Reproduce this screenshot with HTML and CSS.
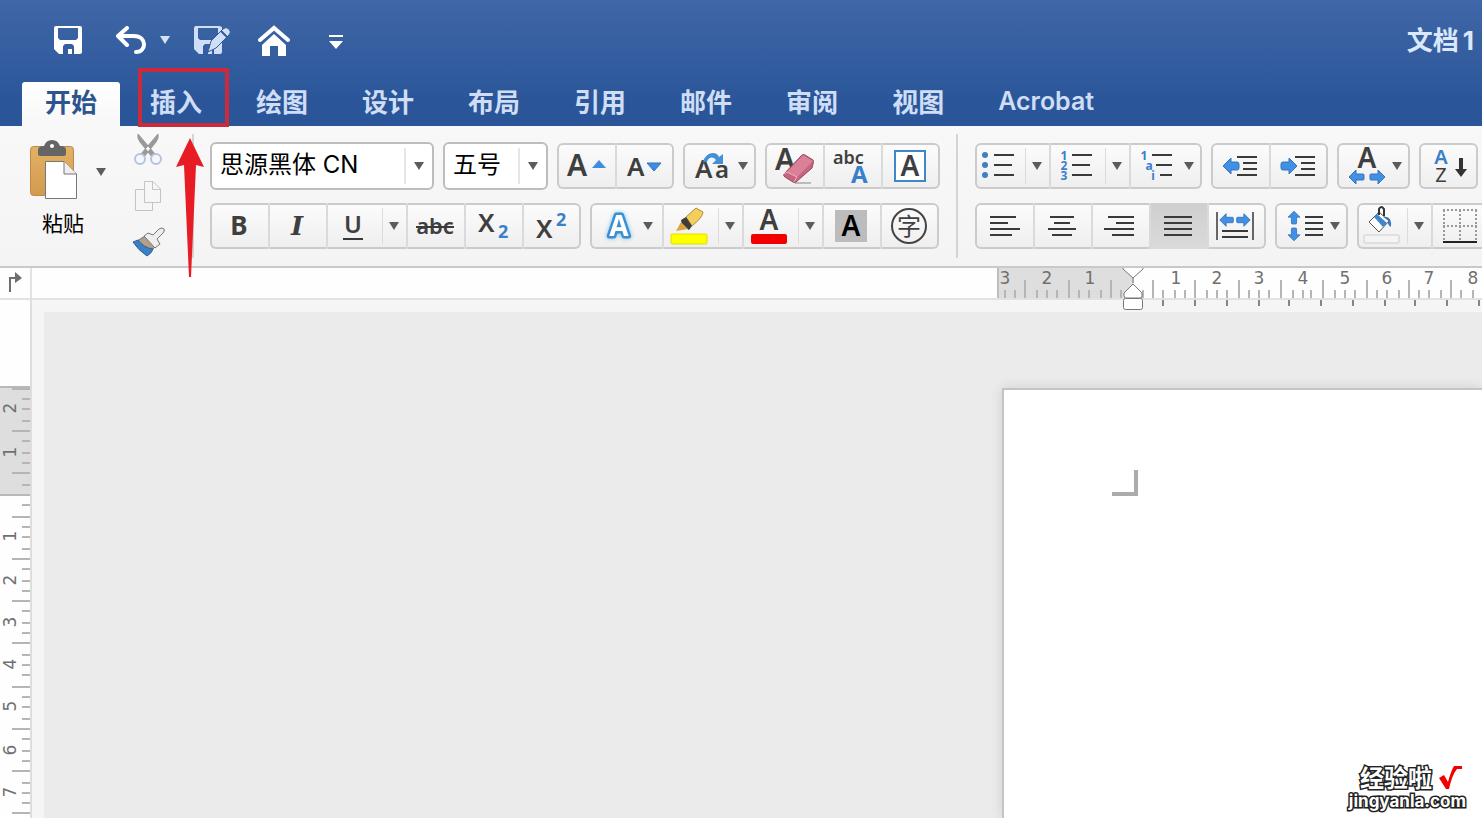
FILE: index.html
```html
<!DOCTYPE html>
<html lang="zh-CN">
<head>
<meta charset="utf-8">
<title>文档1</title>
<link rel="stylesheet" href="styles.css">
</head>
<body>
<svg class="defs" width="0" height="0" aria-hidden="true">
  <defs>
    <path id="tri" d="M-5-4H5L0 4Z" fill="#5c5c5c"/>
    <path id="arrow" d="M-8 0L0-8V-4H6Q8-4 8-2V2Q8 4 6 4H0V8Z" fill="#4190e4" stroke="#3475bd" stroke-width="1"/>
    <path id="arrow-s" d="M-8 0L-1-7V-3H6Q7-3 7-2V2Q7 3 6 3H-1V7Z" fill="#4190e4" stroke="#3475bd" stroke-width="1"/>
    <linearGradient id="board" x1="0" y1="0" x2="0" y2="1"><stop offset="0" stop-color="#e3b165"/><stop offset="1" stop-color="#d29a50"/></linearGradient>
  </defs>
</svg>

<header class="titlebar">
  <div class="quick">
    <button class="quick-btn save" aria-label="保存">
      <svg width="28" height="28" viewBox="0 0 28 28"><path fill="#fff" fill-rule="evenodd" d="M2 0H26Q28 0 28 2V26Q28 28 26 28H5L0 23V2Q0 0 2 0ZM4 2V12L6 14H22L24 12V2ZM9 28H14V23H18V28H20V20L18 18H11L9 20Z"/></svg>
    </button>
    <button class="quick-btn undo" aria-label="撤销">
      <svg width="32" height="28" viewBox="0 0 32 28" fill="none" stroke="#fff" stroke-width="4" stroke-linecap="round" stroke-linejoin="round"><path d="M11 2L2 10L11 19M3 10H18C31 10 31 26 20 26"/></svg>
    </button>
    <button class="quick-btn undo-more" aria-label="撤销选项">
      <svg width="10" height="8" viewBox="-5 -4 10 8"><path d="M-5-4H5L0 4Z" fill="#d3e0f7"/></svg>
    </button>
    <button class="quick-btn edit" aria-label="另存为">
      <svg width="36" height="28" viewBox="0 0 36 28"><path fill="#d0def6" fill-rule="evenodd" d="M2 0H25Q28 0 28 2V26Q28 28 26 28H5L0 23V2Q0 0 2 0ZM4 2V12L6 14H21L24 11V2ZM9 28H14V23H18V28H20V20L18 18H11L9 20Z"/><path d="M29 3Q32 0 35 3Q38 6 35 9L22 22L14 26L17 15Z" fill="#d0def6" stroke="#33599b" stroke-width="1"/><path d="M27 5L33 11" stroke="#33599b" stroke-width="2"/></svg>
    </button>
    <button class="quick-btn home" aria-label="主页">
      <svg width="32" height="31" viewBox="0 0 32 31"><path d="M2 15L16 3L30 15" fill="none" stroke="#fff" stroke-width="4" stroke-linecap="round"/><path d="M4 20L16 9L28 20V31H20V21H12V31H4Z" fill="#fff"/></svg>
    </button>
    <button class="quick-btn custom" aria-label="自定义快速访问工具栏">
      <svg width="14" height="14" viewBox="0 0 14 14" fill="#fff"><path d="M0 0H14V2H0ZM0 6H14L7 14Z"/></svg>
    </button>
    <h1 class="doc-title">文档<span class="doc-num">1</span></h1>
  </div>
  <nav class="tabs" role="tablist">
    <button class="tab tab-active" role="tab" aria-selected="true">开始</button>
    <button class="tab" role="tab">插入</button>
    <button class="tab" role="tab">绘图</button>
    <button class="tab" role="tab">设计</button>
    <button class="tab" role="tab">布局</button>
    <button class="tab" role="tab">引用</button>
    <button class="tab" role="tab">邮件</button>
    <button class="tab" role="tab">审阅</button>
    <button class="tab" role="tab">视图</button>
    <button class="tab" role="tab">Acrobat</button>
  </nav>
</header>

<section class="ribbon">
  <div class="paste">
    <button class="paste-btn">
      <svg width="47" height="59" viewBox="0 0 47 59">
        <rect x="0.500" y="6.500" width="43" height="49" rx="3" fill="url(#board)" stroke="#bd8b45"/>
        <path d="M8 10Q8 6 14 6Q16 0 22 0Q28 0 30 6Q36 6 36 10V14Q36 16 34 16H10Q8 16 8 14Z" fill="#656565"/>
        <circle cx="22" cy="6" r="2" fill="#fff"/>
        <path d="M15.500 21.500H34L46.500 34V58.500H15.500Z" fill="#fff" stroke="#777"/>
        <path d="M34 21.500V34H46.500" fill="#eee" stroke="#777"/>
      </svg>
      <span class="paste-label">粘贴</span>
    </button>
    <button class="paste-more" aria-label="粘贴选项"><svg width="10" height="8" viewBox="-5 -4 10 8"><use href="#tri"/></svg></button>
  </div>
  <div class="clip">
    <button aria-label="剪切"><svg width="28" height="32" viewBox="0 0 28 32"><path d="M4 0Q3 4 6 8L18 23L21 20Z M24 0Q25 4 22 8L10 23L7 20Z" fill="#999" stroke="#999"/><circle cx="6" cy="25" r="5" fill="#f5f7fb" stroke="#b4c5e0" stroke-width="2"/><circle cx="22" cy="25" r="5" fill="#f5f7fb" stroke="#b4c5e0" stroke-width="2"/></svg></button>
    <button aria-label="复制"><svg width="28" height="32" viewBox="0 0 28 32" fill="#f6f6f6" stroke="#c4c4c4"><path d="M1.500 9.500H18.500V30.500H1.500Z"/><path d="M10.500 1.500H19L26.500 9V22.500H10.500ZM18.500 1.500V9.500H26.500"/></svg></button>
    <button aria-label="格式刷"><svg width="32" height="32" viewBox="0 0 32 32"><path d="M11 10L3 15L15 27L22 20Z" fill="#b79d87" stroke="#777"/><path d="M4 14L-1 16Q4 24 13 30Q18 27 19 23Q10 22 4 14Z" fill="#3b7fc4" stroke="#31629a"/><path d="M10 10L14 7L19 9L25 3Q28 1 30 3Q31 5 29 7L23 13L26 18L21 22Z" fill="#eee" stroke="#777"/></svg></button>
  </div>
  <div class="rule"></div>

  <div class="panel font-panel">
    <div class="row row-top">
      <div class="combo combo-name"><input type="text" value="思源黑体 CN" aria-label="字体"><button class="combo-more" aria-label="字体列表"><svg width="10" height="8" viewBox="-5 -4 10 8"><use href="#tri"/></svg></button></div>
      <div class="combo combo-size"><input type="text" value="五号" aria-label="字号"><button class="combo-more" aria-label="字号列表"><svg width="10" height="8" viewBox="-5 -4 10 8"><use href="#tri"/></svg></button></div>
      <div class="group">
        <button class="cell" aria-label="增大字号"><svg viewBox="2 0 56 46"><text x="10" y="33" class="g f30 semi">A</text><path d="M35 25L42 17L49 25Z" fill="#3f8ce0"/></svg></button>
        <button class="cell" aria-label="减小字号"><svg viewBox="2 0 56 46"><text x="12" y="33" class="g f26 semi">A</text><path d="M32 20H46L39 28Z" fill="#3f8ce0" stroke="#3475bd"/></svg></button>
      </div>
      <div class="group">
        <button class="cell drop" aria-label="更改大小写"><svg viewBox="2 0 70 46"><text x="12" y="35" class="g f26 semi">A</text><text x="32" y="35" class="g f24 semi">a</text><path d="M20 19C23 8 34 8 36 14L40 11V21H29L33 17C30 13 25 14 24 19Z" fill="#4190d8"/><use href="#tri" x="60" y="23"/></svg></button>
      </div>
      <div class="group">
        <button class="cell" aria-label="清除格式"><svg viewBox="2 0 56 46"><text x="10" y="27" class="g f30 semi">A</text><path d="M30 40H46" stroke="#bbb" stroke-width="2"/><path d="M19 31L37 12Q38 11 40 12L48 17Q49 18 48 21L47 25L31 39Q30 40 28 39L20 34Q18 33 19 31Z" fill="#c9637e" stroke="#8f4a5c"/><path d="M22 29L38 12L48 18L32 34Z" fill="#dc8098"/><path d="M19 31L22 29L32 34L29 39" fill="none" stroke="#e9b5c0"/></svg></button>
        <button class="cell" aria-label="拼音指南"><svg viewBox="2 0 56 46"><text x="10" y="21" class="g f18 semi">abc</text><text x="28" y="40" class="b f24 bold">A</text></svg></button>
        <button class="cell" aria-label="字符边框"><svg viewBox="2 0 56 46"><rect x="14" y="8" width="30" height="30" fill="#fff" stroke="#3f86cc" stroke-width="2"/><text x="29" y="33" class="g f28 semi mid">A</text></svg></button>
      </div>
    </div>
    <div class="row">
      <div class="group">
        <button class="cell" aria-label="加粗"><svg viewBox="2 0 56 46"><text x="29" y="32" class="g f26 bold mid">B</text></svg></button>
        <button class="cell" aria-label="倾斜"><svg viewBox="2 0 56 46"><text x="29" y="32" class="g f26 serif mid">I</text></svg></button>
        <button class="cell split" aria-label="下划线"><svg viewBox="2 0 54 46"><text x="27" y="30" class="g f24 semi mid">U</text><path d="M17 36H37" class="ln"/></svg></button><button class="more" aria-label="下划线样式"><svg viewBox="-12 -23 24 46"><use href="#tri"/></svg></button>
        <button class="cell" aria-label="删除线"><svg viewBox="2 0 56 46"><text x="29" y="31" class="g f22 semi mid">abc</text><path d="M10 24H48" class="ln"/></svg></button>
        <button class="cell" aria-label="下标"><svg viewBox="2 0 56 46"><text x="14" y="29" class="g f26 semi">X</text><text x="34" y="35" class="b f18 bold">2</text></svg></button>
        <button class="cell" aria-label="上标"><svg viewBox="2 0 56 46"><text x="14" y="35" class="g f26 semi">X</text><text x="34" y="23" class="b f18 bold">2</text></svg></button>
      </div>
      <div class="group">
        <button class="cell drop" aria-label="文本效果"><svg viewBox="2 0 70 46"><text x="29" y="33" class="f28 bold mid glow">A</text><use href="#tri" x="58" y="23"/></svg></button>
        <button class="cell split" aria-label="突出显示"><svg viewBox="2 0 54 46"><path d="M24 14L34 5L41 9Q41 14 30 23Z" fill="#f5cd5c" stroke="#b58d35"/><path d="M19 17L24 14L30 23L27 27L20 23Z" fill="#3d3d3d"/><path d="M14 28L19 19L26 26Z" fill="#d9a441"/><rect x="9" y="31" width="36" height="10" rx="1" fill="#ff0" stroke="#e0dc00"/></svg></button><button class="more" aria-label="突出显示颜色"><svg viewBox="-12 -23 24 46"><use href="#tri"/></svg></button>
        <button class="cell split" aria-label="字体颜色"><svg viewBox="2 0 54 46"><text x="27" y="27" class="g f28 semi mid">A</text><rect x="9" y="31" width="36" height="10" rx="2" fill="#f20000"/></svg></button><button class="more" aria-label="更多字体颜色"><svg viewBox="-12 -23 24 46"><use href="#tri"/></svg></button>
        <button class="cell" aria-label="字符底纹"><svg viewBox="2 0 56 46"><rect x="13" y="7" width="32" height="32" fill="#bcbcbc"/><text x="29" y="33" class="k f28 semi mid">A</text></svg></button>
        <button class="cell" aria-label="带圈字符"><svg viewBox="2 0 56 46"><circle cx="29" cy="23" r="17" fill="none" stroke="#444" stroke-width="2"/><text x="29" y="32" class="g f24 mid">字</text></svg></button>
      </div>
    </div>
  </div>
  <div class="rule rule-wide"></div>

  <div class="panel">
    <div class="row row-top">
      <div class="group">
        <button class="cell bullets" aria-label="项目符号"><svg viewBox="2 0 48 46"><g fill="#3f7fc2"><circle cx="10" cy="12" r="3"/><circle cx="10" cy="22" r="3"/><circle cx="10" cy="32" r="3"/></g><path d="M19 12H39M19 22H37M19 32H39" class="ln"/></svg></button><button class="more" aria-label="项目符号样式"><svg viewBox="-12 -23 24 46"><use href="#tri"/></svg></button>
        <button class="cell split" aria-label="编号"><svg viewBox="2 0 54 46"><g class="b f12 bold mid"><text x="15" y="17">1</text><text x="15" y="27">2</text><text x="15" y="37">3</text></g><path d="M23 12H43M23 22H41M23 32H43" class="ln"/></svg></button><button class="more" aria-label="编号样式"><svg viewBox="-12 -23 24 46"><use href="#tri"/></svg></button>
        <button class="cell drop" aria-label="多级列表"><svg viewBox="2 0 70 46"><g class="b f12 bold mid"><text x="15" y="17">1</text><text x="20" y="27">a</text><text x="24" y="37">i</text></g><path d="M23 12H43M27 22H43M31 32H43" class="ln"/><use href="#tri" x="60" y="23"/></svg></button>
      </div>
      <div class="group">
        <button class="cell" aria-label="减少缩进量"><svg viewBox="2 0 56 46"><path d="M26 14H46M32 20H46M32 26H46M26 32H46" class="ln"/><use href="#arrow" x="20" y="23"/></svg></button>
        <button class="cell" aria-label="增加缩进量"><svg viewBox="2 0 56 46"><path d="M26 14H46M32 20H46M32 26H46M26 32H46" class="ln"/><use href="#arrow" transform="translate(20 23) rotate(180)"/></svg></button>
      </div>
      <div class="group">
        <button class="cell drop" aria-label="中文版式"><svg viewBox="2 0 70 46"><text x="30" y="25" class="g f28 semi mid">A</text><use href="#arrow-s" x="20" y="34"/><use href="#arrow-s" transform="translate(40 34) rotate(180)"/><use href="#tri" x="60" y="23"/></svg></button>
      </div>
      <div class="group">
        <button class="cell" aria-label="排序"><svg viewBox="2 0 56 46"><text x="22" y="21" class="b f20 mid semi">A</text><text x="22" y="39" class="g f20 mid">Z</text><path d="M42 15V29" stroke="#333" stroke-width="4"/><path d="M36 26L42 34L48 26Z" fill="#333"/></svg></button>
      </div>
    </div>
    <div class="row">
      <div class="group">
        <button class="cell" aria-label="左对齐"><svg viewBox="2 0 56 46"><path d="M15 14H41M15 20H33M15 26H45M15 32H37" class="ln"/></svg></button>
        <button class="cell" aria-label="居中"><svg viewBox="2 0 56 46"><path d="M17 14H41M21 20H37M15 26H43M19 32H39" class="ln"/></svg></button>
        <button class="cell" aria-label="右对齐"><svg viewBox="2 0 56 46"><path d="M17 14H43M25 20H43M13 26H43M21 32H43" class="ln"/></svg></button>
        <button class="cell cell-on" aria-label="两端对齐" aria-pressed="true"><svg viewBox="2 0 56 46"><path d="M15 14H43M15 20H43M15 26H43M15 32H43" class="ln"/></svg></button>
        <button class="cell" aria-label="分散对齐"><svg viewBox="2 0 56 46"><path d="M10 9V37M46 9V37" stroke="#666" stroke-width="2"/><use href="#arrow-s" transform="translate(20 17) scale(.9)"/><use href="#arrow-s" transform="translate(36 17) rotate(180) scale(.9)"/><path d="M15 28H41M15 34H41" class="ln"/></svg></button>
      </div>
      <div class="group">
        <button class="cell drop" aria-label="行距"><svg viewBox="2 0 70 46"><use href="#arrow-s" transform="translate(19 15) rotate(90) scale(.85)"/><use href="#arrow-s" transform="translate(19 31) rotate(-90) scale(.85)"/><path d="M30 14H48M30 20H48M30 26H48M30 32H48" class="ln"/><use href="#tri" x="60" y="23"/></svg></button>
      </div>
      <div class="group">
        <button class="cell bullets" aria-label="底纹"><svg viewBox="2 0 48 46"><path d="M12 19L22 9L32 18L22 29Z" fill="#fff" stroke="#555"/><path d="M17 14L26 24L30 20L20 11Z" fill="#3f86cc"/><path d="M26 14Q35 12 34 24Q30 22 31 17Z" fill="#3f77b5"/><path d="M22 12V6Q24 2 27 6V13" fill="none" stroke="#333" stroke-width="2"/><rect x="7" y="32" width="35" height="8" rx="1" fill="#f4f4f4" stroke="#ccc"/></svg></button><button class="more" aria-label="底纹颜色"><svg viewBox="-12 -23 24 46"><use href="#tri"/></svg></button>
        <button class="cell" aria-label="边框"><svg viewBox="2 0 56 46"><path d="M12 7H46M12 23H46M13 7V38M29 7V38M45 7V38" stroke="#999" stroke-width="2" stroke-dasharray="2 2" fill="none"/><path d="M12 39H46" stroke="#222" stroke-width="2"/></svg></button>
      </div>
    </div>
  </div>
</section>

<div class="ruler-row">
  <button class="tab-stop" aria-label="制表符"><svg width="30" height="30" viewBox="0 0 30 30"><path d="M10 24V10H16" fill="none" stroke="#6d6d6d" stroke-width="2"/><path d="M15 4L22 10L15 15Z" fill="#6d6d6d"/></svg></button>
  <svg class="ruler-h" width="485" height="42" viewBox="0 0 485 42">
    <rect width="137" height="30" fill="#dedede"/><path d="M1 0V30" stroke="#bdbdbd" stroke-width="2"/>
    <path d="M28 12V30M72 12V30M114 12V30M156 12V30M198 12V30M242 12V30M284 12V30M326 12V30M370 12V30M412 12V30M454 12V30M8 22V30M18 22V30M40 22V30M50 22V30M60 22V30M82 22V30M92 22V30M104 22V30M124 22V30M146 22V30M166 22V30M178 22V30M188 22V30M210 22V30M220 22V30M230 22V30M252 22V30M262 22V30M272 22V30M296 22V30M306 22V30M314 22V30M338 22V30M348 22V30M358 22V30M380 22V30M390 22V30M402 22V30M422 22V30M432 22V30M444 22V30M464 22V30M476 22V30" stroke="#b5b5b5" stroke-width="2"/>
    <path d="M166 32V38M198 32V38M230 32V38M262 32V38M292 32V38M324 32V38M356 32V38M388 32V38M418 32V38M450 32V38M482 32V38" stroke="#858585" stroke-width="2"/>
    <g class="num"><text x="8" y="16">3</text><text x="50" y="16">2</text><text x="93" y="16">1</text><text x="179" y="16">1</text><text x="220" y="16">2</text><text x="262" y="16">3</text><text x="306" y="16">4</text><text x="348" y="16">5</text><text x="390" y="16">6</text><text x="432" y="16">7</text><text x="476" y="16">8</text></g>
    <g fill="#fff" stroke="#777"><path d="M136 10V15"/><path d="M126 0V1L136 10L146 1V0" /><path d="M136 16L145 25V28L144 30H128L127 28V25Z"/><rect x="126.500" y="30.500" width="19" height="11" rx="2"/></g>
  </svg>
</div>

<main class="workspace">
  <div class="ruler-side">
    <svg width="30" height="519" viewBox="0 0 30 519">
      <rect y="86" width="30" height="109" fill="#dedede"/>
      <path d="M0 87H30M0 195H30" stroke="#b8b8b8" stroke-width="2"/>
      <path d="M12 89H30M12 131H30M12 173H30M12 217H30M12 259H30M12 301H30M12 343H30M12 387H30M12 429H30M12 471H30M12 513H30M22 99H30M22 109H30M22 121H30M22 141H30M22 153H30M22 163H30M22 185H30M22 205H30M22 227H30M22 237H30M22 249H30M22 269H30M22 281H30M22 291H30M22 311H30M22 323H30M22 333H30M22 355H30M22 365H30M22 375H30M22 397H30M22 407H30M22 419H30M22 439H30M22 451H30M22 461H30M22 483H30M22 493H30M22 503H30" stroke="#b5b5b5" stroke-width="2"/>
      <g class="num" transform="rotate(-90)"><text x="-108" y="16">2</text><text x="-152" y="16">1</text><text x="-236" y="16">1</text><text x="-280" y="16">2</text><text x="-322" y="16">3</text><text x="-364" y="16">4</text><text x="-406" y="16">5</text><text x="-450" y="16">6</text><text x="-492" y="16">7</text></g>
    </svg>
  </div>
  <div class="canvas">
    <article class="page"><div class="crop-mark"></div></article>
  </div>
</main>

<div class="callout"></div>
<svg class="pointer" width="28" height="140" viewBox="0 0 28 140"><path d="M14 0L28 29L20 27L15 139H13L8 27L0 29Z" fill="#e81c25"/></svg>
<div class="brand"><span class="brand-name">经验啦<svg width="24" height="24" viewBox="0 0 24 24"><path d="M1 12L6 9L10 16Q13 5 16 0H24V3H19Q14 9 11 23H8Z" fill="#f00000"/></svg></span><span class="brand-url">jingyanla.com</span></div>
</body>
</html>
```
FILE: styles.css
```css
* { box-sizing: border-box; }
body {
  margin: 0;
  height: 100vh;
  display: flex;
  flex-direction: column;
  overflow: hidden;
  position: relative;
  background: #f5f5f5;
  font-family: Inter, "Noto Sans CJK SC", sans-serif;
}
button {
  border: 0;
  margin: 0;
  padding: 0;
  background: none;
  color: inherit;
  font: inherit;
  flex: none;
}
svg { display: block; flex: none; }
.defs { position: absolute; }

/* title bar */
.titlebar {
  flex: none;
  background: linear-gradient(#4067a7, #2a5699 80%);
}
.quick {
  height: 82px;
  display: flex;
  align-items: center;
  padding: 0 8px 2px 54px;
}
.undo { margin-left: 34px; }
.undo-more { margin-left: 12px; }
.edit { margin-left: 24px; }
.home { margin-left: 28px; }
.custom { margin: 4px 0 0 39px; }
.doc-title {
  margin: 2px 0 0 auto;
  font-size: 26px;
  font-weight: 700;
  line-height: 32px;
  color: #dbe7fa;
}
.doc-num { margin-left: 4px; }
.tabs {
  display: flex;
  padding-left: 22px;
}
.tab {
  height: 44px;
  padding: 0 27px 6px;
  font: 700 26px/38px "Noto Sans CJK SC", sans-serif;
  color: #cfddf5;
  white-space: nowrap;
}
.tab-active {
  padding: 0 23px 6px;
  margin-right: 3px;
  color: #2d548f;
  background: linear-gradient(#fff, #f7f7f7);
  border-radius: 3px 3px 0 0;
}
.tab:last-child { font-family: Inter, sans-serif; font-size: 25px; font-weight: 600; }

/* ribbon */
.ribbon {
  flex: none;
  display: flex;
  align-items: flex-start;
  height: 142px;
  padding: 8px 0 0 30px;
  border-bottom: 2px solid #c9c9c9;
  background: linear-gradient(#f8f8f8, #f4f4f4);
  overflow: hidden;
}
.paste {
  flex: none;
  display: flex;
  align-items: flex-start;
  width: 76px;
  padding-top: 6px;
}
.paste-btn { width: 66px; text-align: left; }
.paste-label {
  display: block;
  padding: 10px 0 0 12px;
  font-size: 21px;
  line-height: 30px;
  color: #000;
}
.paste-more { padding-top: 28px; }
.clip {
  flex: none;
  display: flex;
  flex-direction: column;
  align-items: flex-start;
  gap: 14px;
  width: 86px;
  padding-left: 28px;
}
.clip svg { overflow: visible; }
.rule {
  flex: none;
  width: 2px;
  height: 124px;
  background: #d4d4d4;
}
.font-panel { margin-left: 16px; }
.rule-wide { margin: 0 17px 0 16px; }
.panel {
  flex: none;
  display: flex;
  flex-direction: column;
  gap: 13px;
  padding-top: 8px;
}
.row {
  display: flex;
  align-items: center;
  gap: 9px;
}
.row-top { height: 48px; }
.combo {
  display: flex;
  align-items: center;
  height: 48px;
  border: 2px solid #bdbdbd;
  border-radius: 6px;
  background: #fff;
}
.combo-name { width: 224px; }
.combo-size { width: 105px; }
.combo input {
  flex: 1;
  min-width: 0;
  height: 44px;
  padding: 0 0 8px 8px;
  border: 0;
  background: none;
  font: 24px "Inter", "Noto Sans CJK SC", sans-serif;
  color: #000;
  outline: 0;
}
.combo-more {
  width: 28px;
  height: 36px;
  padding-left: 8px;
  border-left: 2px solid #e6e6e6;
}
.group {
  display: flex;
  height: 46px;
  padding-right: 1px;
  border-radius: 6px;
  background: linear-gradient(#fcfcfc, #eee);
  box-shadow: inset 0 0 0 2px #cbcbcb;
}
.cell {
  width: 58px;
  height: 46px;
  border-left: 2px solid #dadada;
}
.cell:first-child { border-color: transparent; }
.cell svg { width: 100%; height: 46px; overflow: visible; }
.drop { width: 72px; }
.split { width: 56px; }
.bullets { width: 50px; }
.cell-on { background: linear-gradient(#cfcfcf, #dadada); }
.more { width: 24px; height: 46px; }
.more svg {
  width: 24px;
  height: 46px;
  background: linear-gradient(#dcdcdc, #dcdcdc) 0 5px / 1px 36px no-repeat;
}

/* glyphs inside tool buttons */
.cell text { font-family: "Noto Sans", "Noto Sans CJK SC", sans-serif; }
.g { fill: #3f3f3f; }
.b { fill: #3a7fca; }
.k { fill: #000; }
.mid { text-anchor: middle; }
.semi { font-weight: 600; }
.bold { font-weight: 700; }
.f12 { font-size: 12px; }
.f18 { font-size: 18px; }
.f20 { font-size: 20px; }
.f22 { font-size: 22px; }
.f24 { font-size: 24px; }
.f26 { font-size: 26px; }
.f28 { font-size: 28px; }
.f30 { font-size: 30px; }
.cell .serif { font-family: "DejaVu Serif", serif; font-weight: 700; font-style: italic; }
.ln { fill: none; stroke: #3a3a3a; stroke-width: 2; }
.glow { fill: #fff; stroke: #3c8fd0; stroke-width: 5px; stroke-linejoin: round; paint-order: stroke fill; filter: drop-shadow(0 0 2px #7cc0ee); }

/* rulers */
.ruler-row {
  flex: none;
  display: flex;
  justify-content: space-between;
  height: 32px;
  border-bottom: 2px solid #e2e2e2;
  background: #fefefe;
  position: relative;
  z-index: 1;
}
.tab-stop { height: 30px; border-right: 2px solid #e2e2e2; }
.ruler-h { overflow: visible; }
.num text { font-family: "DejaVu Sans", sans-serif; font-size: 17px; fill: #707070; text-anchor: middle; }
.workspace {
  flex: 1;
  min-height: 0;
  display: flex;
}
.ruler-side {
  flex: none;
  width: 32px;
  border-right: 2px solid #dedede;
  background: #fefefe;
  overflow: hidden;
}
.canvas {
  flex: 1;
  display: flex;
  justify-content: flex-end;
  margin: 12px 0 0 12px;
  padding-top: 76px;
  background: #ebebeb;
  overflow: hidden;
}
.page {
  width: 480px;
  border: solid #c4c4c4;
  border-width: 2px 0 0 2px;
  padding: 80px 0 0 108px;
  background: #fff;
  box-shadow: 0 0 12px rgba(0, 0, 0, .12);
}
.crop-mark {
  width: 26px;
  height: 26px;
  border: solid #ababab;
  border-width: 0 4px 4px 0;
}

/* annotations over the window */
.callout {
  position: absolute;
  left: 138px;
  top: 68px;
  width: 91px;
  height: 59px;
  border: 4px solid #cb2a3b;
}
.pointer { position: absolute; left: 176px; top: 138px; z-index: 2; }
.brand {
  position: absolute;
  right: 16px;
  bottom: 8px;
  display: flex;
  flex-direction: column;
  align-items: flex-end;
  color: #fff;
  font-weight: 700;
  -webkit-text-stroke: 3px #222;
  paint-order: stroke fill;
}
.brand-name { display: flex; gap: 6px; padding-right: 4px; font-size: 24px; line-height: 26px; }
.brand-url { font: 700 17px/18px Inter, sans-serif; }
```
